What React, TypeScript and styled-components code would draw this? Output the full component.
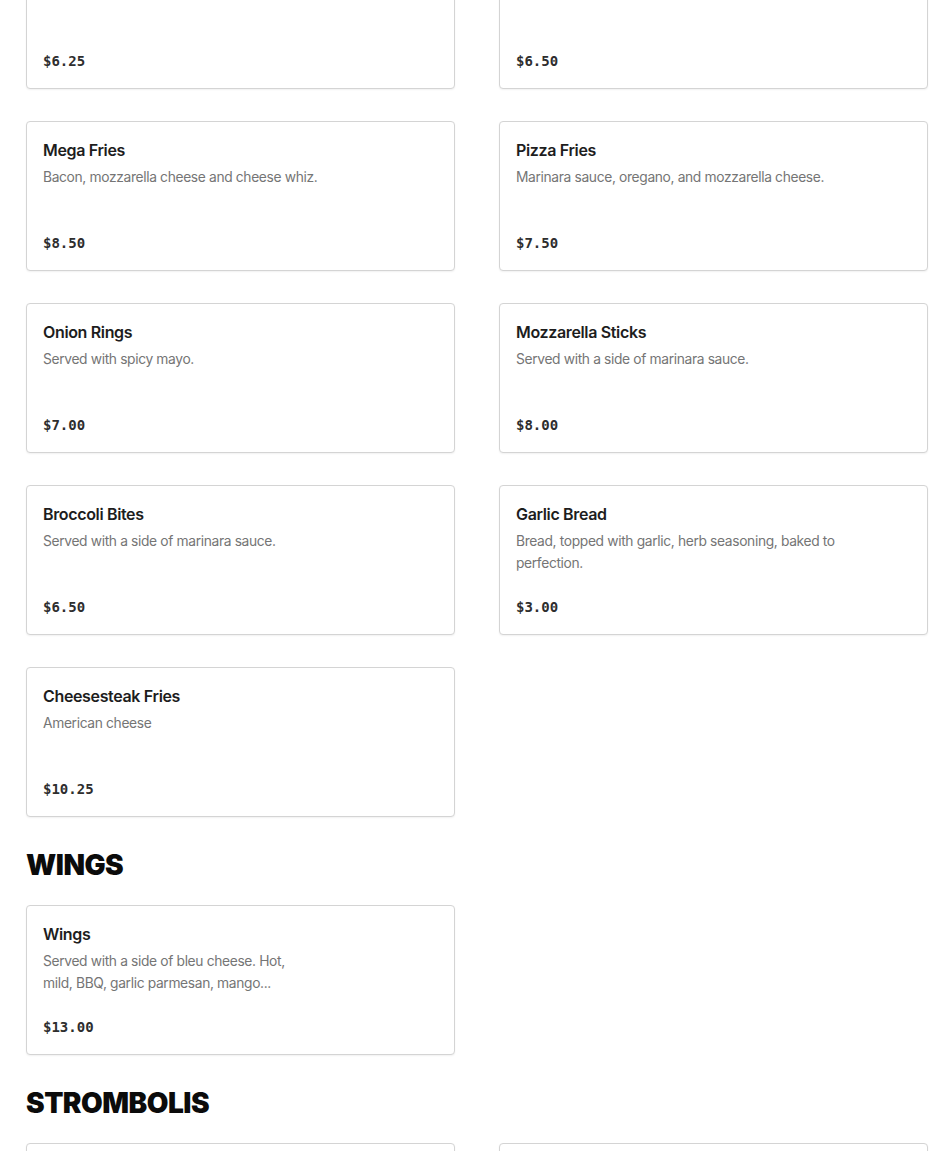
import React from "react";
import styled, { createGlobalStyle } from "styled-components";

type Item = { name: string; description?: string; price: string };

const sections: { title?: string; items: Item[] }[] = [
  {
    items: [
      { name: "French Fries", description: "Classic fries.", price: "$6.25" },
      { name: "Sweet Potato Fries", price: "$6.50" },
      { name: "Mega Fries", description: "Bacon, mozzarella cheese and cheese whiz.", price: "$8.50" },
      { name: "Pizza Fries", description: "Marinara sauce, oregano, and mozzarella cheese.", price: "$7.50" },
      { name: "Onion Rings", description: "Served with spicy mayo.", price: "$7.00" },
      { name: "Mozzarella Sticks", description: "Served with a side of marinara sauce.", price: "$8.00" },
      { name: "Broccoli Bites", description: "Served with a side of marinara sauce.", price: "$6.50" },
      {
        name: "Garlic Bread",
        description: "Bread, topped with garlic, herb seasoning, baked to perfection.",
        price: "$3.00",
      },
      { name: "Cheesesteak Fries", description: "American cheese", price: "$10.25" },
    ],
  },
  {
    title: "WINGS",
    items: [
      {
        name: "Wings",
        description: "Served with a side of bleu cheese. Hot,\nmild, BBQ, garlic parmesan, mango...",
        price: "$13.00",
      },
    ],
  },
  {
    title: "STROMBOLIS",
    items: [
      { name: "Cheese Stromboli", description: "Mozzarella and ricotta cheese.", price: "$12.00" },
      { name: "Steak Stromboli", description: "Steak, onions and mozzarella cheese.", price: "$14.00" },
    ],
  },
];

const GlobalStyle = createGlobalStyle`
  html, body {
    margin: 0;
    padding: 0;
    background: #ffffff;
    overflow: hidden;
  }
  body {
    font-family: Inter, "Noto Sans", sans-serif;
    color: #1f1f1f;
  }
`;

// the reference is scrolled part-way down the menu
const Page = styled.main`
  padding: 0 22px 40px 26px;
  margin-top: -61px;
`;

const Section = styled.section`
  display: flex;
  flex-direction: column;
`;

const Heading = styled.h2`
  margin: 30px 0 22px;
  font-family: Inter, "Liberation Sans", sans-serif;
  font-size: 28px;
  line-height: 36px;
  font-weight: 900;
  letter-spacing: -0.5px;
  color: #0b0b0b;
`;

const Grid = styled.div`
  display: grid;
  grid-template-columns: 1fr 1fr;
  column-gap: 44px;
  row-gap: 32px;
`;

const Card = styled.article`
  box-sizing: border-box;
  height: 150px;
  padding: 16px 16px 17px;
  border: 1px solid #d4d4d4;
  border-radius: 4px;
  box-shadow: 0 1px 2px rgba(0, 0, 0, 0.06);
  background: #fff;
  display: flex;
  flex-direction: column;
`;

const Name = styled.h3`
  margin: 0;
  font-size: 16px;
  line-height: 24px;
  font-weight: 600;
  letter-spacing: -0.35px;
  color: #1d1d1d;
`;

const Description = styled.p`
  margin: 4px 0 0;
  max-width: 340px;
  font-size: 13.8px;
  line-height: 22px;
  letter-spacing: -0.35px;
  color: #757575;
  white-space: pre-line;
  display: -webkit-box;
  -webkit-line-clamp: 2;
  -webkit-box-orient: vertical;
  overflow: hidden;
`;

const Price = styled.span`
  margin-top: auto;
  font-family: "DejaVu Sans Mono", "Liberation Mono", monospace;
  font-size: 14px;
  line-height: 20px;
  font-weight: 700;
  color: #2e2e2e;
`;

const MenuCard = ({ item }: { item: Item }) => (
  <Card>
    <Name>{item.name}</Name>
    {item.description && <Description>{item.description}</Description>}
    <Price>{item.price}</Price>
  </Card>
);

export default function App() {
  return (
    <>
      <GlobalStyle />
      <Page>
        {sections.map((section, i) => (
          <Section key={i}>
            {section.title && <Heading>{section.title}</Heading>}
            <Grid>
              {section.items.map((item) => (
                <MenuCard key={item.name} item={item} />
              ))}
            </Grid>
          </Section>
        ))}
      </Page>
    </>
  );
}
